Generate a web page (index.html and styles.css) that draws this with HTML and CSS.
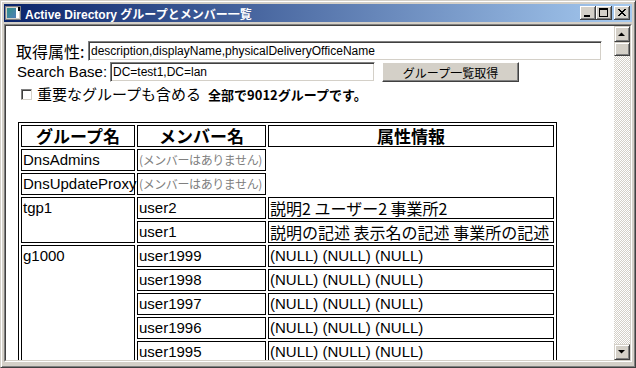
FILE: index.html
```html
<!DOCTYPE html>
<html lang="ja">
<head>
    <meta charset="UTF-8">
    <title>Active Directory グループとメンバー一覧</title>
    <link rel="stylesheet" href="styles.css">
</head>
<body>
    <div class="window">
        <div class="titlebar">
            <svg class="title-icon" width="16" height="16" viewBox="0 0 16 16">
                <defs>
                    <linearGradient id="scr" x1="0" y1="0" x2="1" y2="1">
                        <stop offset="0" stop-color="#2f8f86"/>
                        <stop offset="1" stop-color="#4f7fb8"/>
                    </linearGradient>
                </defs>
                <rect x="0.5" y="1.5" width="15" height="13" fill="#d4d0c8" stroke="#808080"/>
                <rect x="2" y="3" width="9" height="10" fill="url(#scr)"/>
                <rect x="11" y="3" width="3" height="10" fill="#ffffff"/>
                <rect x="13" y="2" width="2" height="4" fill="#000000"/>
            </svg>
            <span class="title">Active Directory グループとメンバー一覧</span>
            <div class="controls">
                <div class="ctl">
                    <svg width="16" height="14" viewBox="0 0 16 14"><rect x="4" y="9" width="6" height="2" fill="#000"/></svg>
                </div>
                <div class="ctl">
                    <svg width="16" height="14" viewBox="0 0 16 14"><rect x="3.5" y="2.5" width="8" height="8" fill="none" stroke="#000"/><rect x="3" y="2" width="9" height="2" fill="#000"/></svg>
                </div>
                <div class="ctl close">
                    <svg width="16" height="14" viewBox="0 0 16 14"><path d="M4 3 L11 10 M5 3 L12 10 M11 3 L4 10 M12 3 L5 10" stroke="#000" stroke-width="1" shape-rendering="crispEdges"/></svg>
                </div>
            </div>
        </div>

        <div class="client">
            <div class="client-inner">
                <div class="page">
                    <div class="field-row">
                        <span class="label label-attr">取得属性:</span>
                        <input class="text-box wide" type="text" value="description,displayName,physicalDeliveryOfficeName">
                    </div>
                    <div class="field-row">
                        <span class="label label-base">Search Base:</span>
                        <input class="text-box base" type="text" value="DC=test1,DC=lan">
                        <button class="push-btn">グループ一覧取得</button>
                    </div>
                    <div class="check-row">
                        <span class="check"></span>
                        <span class="check-label">重要なグループも含める</span>
                        <strong class="count">全部で9012グループです。</strong>
                    </div>

                    <table class="groups">
                        <colgroup>
                            <col class="c-group">
                            <col class="c-member">
                            <col class="c-attr">
                        </colgroup>
                        <tr>
                            <th>グループ名</th>
                            <th>メンバー名</th>
                            <th>属性情報</th>
                        </tr>
                        <tr>
                            <td>DnsAdmins</td>
                            <td><span class="none">(メンバーはありません)</span></td>
                        </tr>
                        <tr>
                            <td>DnsUpdateProxy</td>
                            <td><span class="none">(メンバーはありません)</span></td>
                        </tr>
                        <tr>
                            <td rowspan="2">tgp1</td>
                            <td>user2</td>
                            <td class="jp">説明2 ユーザー2 事業所2</td>
                        </tr>
                        <tr>
                            <td>user1</td>
                            <td class="jp">説明の記述 表示名の記述 事業所の記述</td>
                        </tr>
                        <tr>
                            <td rowspan="5">g1000</td>
                            <td>user1999</td>
                            <td>(NULL) (NULL) (NULL)</td>
                        </tr>
                        <tr>
                            <td>user1998</td>
                            <td>(NULL) (NULL) (NULL)</td>
                        </tr>
                        <tr>
                            <td>user1997</td>
                            <td>(NULL) (NULL) (NULL)</td>
                        </tr>
                        <tr>
                            <td>user1996</td>
                            <td>(NULL) (NULL) (NULL)</td>
                        </tr>
                        <tr>
                            <td>user1995</td>
                            <td>(NULL) (NULL) (NULL)</td>
                        </tr>
                    </table>
                </div>

                <div class="vscroll">
                    <div class="sb-btn">
                        <svg width="14" height="14" viewBox="0 0 14 14"><path d="M3 9 H10 L6.5 5.5 Z" fill="#000"/></svg>
                    </div>
                    <div class="sb-thumb"></div>
                    <div class="sb-track"></div>
                    <div class="sb-btn">
                        <svg width="14" height="14" viewBox="0 0 14 14"><path d="M3 5 H10 L6.5 8.5 Z" fill="#000"/></svg>
                    </div>
                </div>
            </div>
        </div>
    </div>
</body>
</html>
```

FILE: styles.css
```css
* {
    box-sizing: border-box;
}

body {
    margin: 0;
    background: #d4d0c8;
    font-family: "Noto Sans CJK JP", sans-serif;
    color: #000;
}

/* window frame */
.window {
    width: 636px;
    height: 368px;
    display: flex;
    flex-direction: column;
    padding: 3px 3px 5px 3px;
    border: 1px solid;
    border-color: #d4d0c8 #404040 #404040 #d4d0c8;
    box-shadow: inset 1px 1px #fff, inset -1px -1px #808080;
    background: #d4d0c8;
}

.titlebar {
    height: 18px;
    display: flex;
    align-items: center;
    padding: 0 2px 0 1px;
    background: linear-gradient(to right, #0a246a, #a6caf0);
}

.title-icon {
    display: block;
    margin-right: 4px;
}

.title {
    color: #fff;
    font-family: "Liberation Sans", "Noto Sans CJK JP", sans-serif;
    font-weight: bold;
    font-size: 12px;
    white-space: nowrap;
}

.controls {
    margin-left: auto;
    display: flex;
}

.ctl {
    width: 16px;
    height: 14px;
    background: #d4d0c8;
    box-shadow: inset -1px -1px #404040, inset 1px 1px #fff, inset -2px -2px #808080;
}

.ctl svg {
    display: block;
}

.ctl.close {
    margin-left: 2px;
}

/* client area */
.client {
    flex: 1;
    display: flex;
    margin-top: 2px;
    border: 1px solid;
    border-color: #808080 #fff #fff #808080;
    min-height: 0;
}

.client-inner {
    flex: 1;
    display: flex;
    border: 1px solid;
    border-color: #404040 #d4d0c8 #d4d0c8 #404040;
    min-height: 0;
    overflow: hidden;
}

.page {
    flex: 1;
    min-width: 0;
    background: #fff;
    padding: 15px 10px 0 10px;
    overflow: hidden;
}

/* form */
.field-row {
    display: flex;
    align-items: center;
    height: 20px;
    margin-bottom: 1px;
}

.label {
    font-size: 16px;
    line-height: 20px;
    white-space: nowrap;
}

.label-attr {
    width: 72px;
}

.label-base {
    width: 93px;
    margin-left: 1px;
    font-family: "Liberation Sans", "Noto Sans CJK JP", sans-serif;
    font-size: 15px;
}

.text-box {
    height: 20px;
    padding: 0 2px;
    font-family: "Liberation Sans", "Noto Sans CJK JP", sans-serif;
    font-size: 12px;
    border: 1px solid;
    border-color: #808080 #fff #fff #808080;
    box-shadow: inset 1px 1px #404040, inset -1px -1px #d4d0c8;
    outline: none;
    color: #000;
}

.text-box.wide {
    width: 514px;
}

.text-box.base {
    width: 265px;
}

.push-btn {
    margin-left: 7px;
    width: 137px;
    height: 20px;
    padding: 0;
    font-family: "Noto Sans CJK JP", sans-serif;
    font-size: 12px;
    background: #d4d0c8;
    border: 1px solid;
    border-color: #fff #404040 #404040 #fff;
    box-shadow: inset -1px -1px #808080;
    color: #000;
}

.check-row {
    display: flex;
    align-items: center;
    height: 18px;
    margin-top: 3px;
}

.check {
    width: 11px;
    height: 11px;
    margin-left: 5px;
    margin-right: 5px;
    border: 1px solid;
    border-color: #808080 #d4d0c8 #d4d0c8 #808080;
    box-shadow: inset 1px 1px #404040;
    background: #fff;
}

.check-label {
    font-size: 15px;
    line-height: 18px;
}

.count {
    margin-left: 7px;
    font-size: 13px;
    font-weight: bold;
}

/* table */
.groups {
    margin: 19px 0 0 2px;
    width: 539px;
    table-layout: fixed;
    border: 1px solid #000;
    border-spacing: 2px;
}

.c-group {
    width: 114px;
}

.c-member {
    width: 129px;
}

.c-attr {
    width: 286px;
}

.groups th,
.groups td {
    border: 1px solid #000;
    padding: 0 1px;
    font-family: "Liberation Sans", "Noto Sans CJK JP", sans-serif;
    font-size: 15px;
    line-height: 20px;
    white-space: nowrap;
    text-align: left;
    vertical-align: top;
}

.groups td.jp {
    font-family: "Noto Sans CJK JP", sans-serif;
    font-size: 16px;
}

.groups th {
    font-family: "Noto Sans CJK JP", sans-serif;
    font-size: 17px;
    font-weight: bold;
    text-align: center;
}

.none {
    font-family: "Noto Sans CJK JP", sans-serif;
    font-size: 12px;
    line-height: 1;
    letter-spacing: -0.4px;
    color: #808080;
}

/* scroll bar */
.vscroll {
    width: 16px;
    display: flex;
    flex-direction: column;
}

.sb-btn,
.sb-thumb {
    background: #d4d0c8;
    border: 1px solid;
    border-color: #d4d0c8 #404040 #404040 #d4d0c8;
    box-shadow: inset 1px 1px #fff, inset -1px -1px #808080;
}

.sb-btn {
    height: 16px;
}

.sb-btn svg {
    display: block;
}

.sb-thumb {
    height: 14px;
}

.sb-track {
    flex: 1;
    background: repeating-conic-gradient(#d4d0c8 0 25%, #fff 0 50%) 0 0 / 2px 2px;
}
```
